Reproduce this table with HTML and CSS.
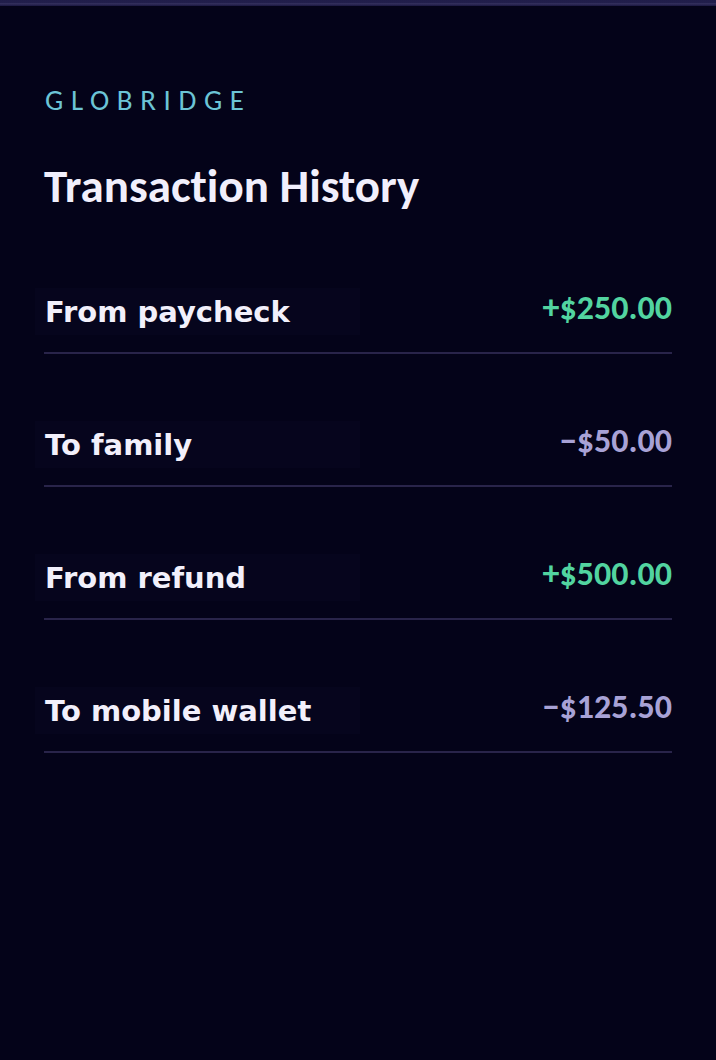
FILE: index.html
```html
<!DOCTYPE html>
<html lang="en">
<head>
  <meta charset="UTF-8" />
  <meta name="viewport" content="width=device-width, initial-scale=1.0"/>
  <title>Globridge - Transaction History</title>
  <link rel="stylesheet" href="styles.css">
</head>
<body>
  <div class="topbar"></div>
  <div class="container">
    <div class="brand">GLOBRIDGE</div>
    <h1>Transaction History</h1>

    <ul class="list">
      <li class="row">
        <span class="label">From paycheck</span>
        <span class="amount in">+$250.00</span>
      </li>
      <li class="row">
        <span class="label">To family</span>
        <span class="amount out">&minus;$50.00</span>
      </li>
      <li class="row">
        <span class="label">From refund</span>
        <span class="amount in">+$500.00</span>
      </li>
      <li class="row">
        <span class="label">To mobile wallet</span>
        <span class="amount out">&minus;$125.50</span>
      </li>
    </ul>
  </div>
</body>
</html>
```

FILE: styles.css
```css
body {
  background-color: #040319;
  font-family: "DejaVu Sans", sans-serif;
  margin: 0;
  min-height: 100vh;
}
.topbar {
  height: 6px;
  background: linear-gradient(to bottom, #201d4a 0%, #221f4c 50%, #34305e 60%, #1a1740 100%);
}
.container {
  padding: 0 44px 0 44px;
}
.brand {
  font-family: Carlito, Calibri, Lato, sans-serif;
  color: #6cc4d6;
  font-size: 29px;
  letter-spacing: 7.6px;
  margin-top: 77px;
  padding-left: 1px;
  line-height: 1.2;
}
h1 {
  font-family: Carlito, Calibri, Lato, sans-serif;
  font-variant-ligatures: none;
  color: #f1effc;
  font-size: 47px;
  font-weight: bold;
  margin: 40px 0 0 0;
  line-height: 1.2;
}
.list {
  list-style: none;
  margin: 0;
  padding: 0;
}
.row {
  display: flex;
  justify-content: space-between;
  align-items: flex-start;
  padding: 67px 0 17px 0;
  border-bottom: 2px solid #29244a;
}
.row:first-child {
  padding-top: 74px;
}
.label {
  display: block;
  width: 305px;
  height: 47px;
  line-height: 48px;
  margin-left: -9px;
  padding: 0 10px;
  background-color: #06051d;
  color: #f2f0fb;
  font-size: 29px;
  font-weight: bold;
}
.amount {
  font-family: Carlito, Calibri, Lato, sans-serif;
  font-size: 34px;
  font-weight: bold;
  line-height: 40px;
}
.amount.in {
  color: #52d4a0;
}
.amount.out {
  color: #a8a2d6;
}
```
